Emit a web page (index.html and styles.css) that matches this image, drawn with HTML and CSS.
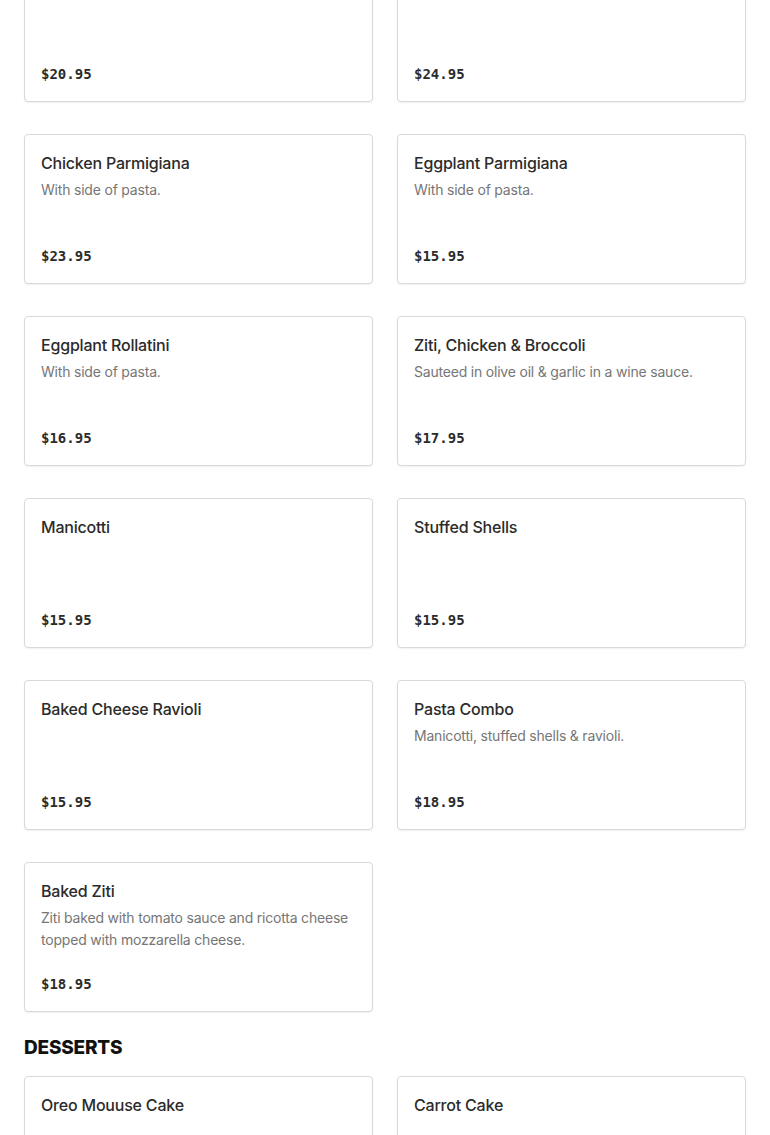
FILE: index.html
```html
<!DOCTYPE html>
<html lang="en">
<head>
<meta charset="utf-8">
<title>Menu</title>
<link rel="stylesheet" href="styles.css">
</head>
<body>
<main class="menu">
  <section class="section section-scrolled">
    <div class="grid">
      <article class="card">
        <h3 class="card-title">Chicken Marsala</h3>
        <p class="card-price">$20.95</p>
      </article>
      <article class="card">
        <h3 class="card-title">Veal Parmigiana</h3>
        <p class="card-price">$24.95</p>
      </article>
      <article class="card">
        <h3 class="card-title">Chicken Parmigiana</h3>
        <p class="card-desc">With side of pasta.</p>
        <p class="card-price">$23.95</p>
      </article>
      <article class="card">
        <h3 class="card-title">Eggplant Parmigiana</h3>
        <p class="card-desc">With side of pasta.</p>
        <p class="card-price">$15.95</p>
      </article>
      <article class="card">
        <h3 class="card-title">Eggplant Rollatini</h3>
        <p class="card-desc">With side of pasta.</p>
        <p class="card-price">$16.95</p>
      </article>
      <article class="card">
        <h3 class="card-title">Ziti, Chicken &amp; Broccoli</h3>
        <p class="card-desc">Sauteed in olive oil &amp; garlic in a wine sauce.</p>
        <p class="card-price">$17.95</p>
      </article>
      <article class="card">
        <h3 class="card-title">Manicotti</h3>
        <p class="card-price">$15.95</p>
      </article>
      <article class="card">
        <h3 class="card-title">Stuffed Shells</h3>
        <p class="card-price">$15.95</p>
      </article>
      <article class="card">
        <h3 class="card-title">Baked Cheese Ravioli</h3>
        <p class="card-price">$15.95</p>
      </article>
      <article class="card">
        <h3 class="card-title">Pasta Combo</h3>
        <p class="card-desc">Manicotti, stuffed shells &amp; ravioli.</p>
        <p class="card-price">$18.95</p>
      </article>
      <article class="card">
        <h3 class="card-title">Baked Ziti</h3>
        <p class="card-desc">Ziti baked with tomato sauce and ricotta cheese topped with mozzarella cheese.</p>
        <p class="card-price">$18.95</p>
      </article>
    </div>
  </section>
  <section class="section">
    <h2 class="section-title">DESSERTS</h2>
    <div class="grid">
      <article class="card">
        <h3 class="card-title">Oreo Mouuse Cake</h3>
        <p class="card-price">$6.95</p>
      </article>
      <article class="card">
        <h3 class="card-title">Carrot Cake</h3>
        <p class="card-price">$6.95</p>
      </article>
    </div>
  </section>
</main>
</body>
</html>
```

FILE: styles.css
```css
* { box-sizing: border-box; }
html, body { margin: 0; padding: 0; background: #fff; }
body {
  font-family: "Inter", "Liberation Sans", sans-serif;
  color: #2b2b2b;
  overflow: hidden;
}
.menu { padding: 0 24px; }
.section-scrolled { margin-top: -48px; }
.grid {
  display: grid;
  grid-template-columns: 1fr 1fr;
  column-gap: 24px;
  row-gap: 32px;
}
.card {
  display: flex;
  flex-direction: column;
  min-height: 150px;
  padding: 16px;
  border: 1px solid #d9d9d9;
  border-radius: 4px;
  box-shadow: 0 1px 2px rgba(0,0,0,0.06);
  background: #fff;
}
.card-title {
  margin: 0 0 4px;
  font-size: 16px;
  line-height: 24px;
  font-weight: 500;
  letter-spacing: -0.2px;
  color: #2b2b2b;
}
.card-desc {
  margin: 0;
  font-size: 14px;
  line-height: 22px;
  letter-spacing: -0.2px;
  color: #767676;
}
.card-price {
  margin: auto 0 0;
  padding-top: 22px;
  font-family: "DejaVu Sans Mono", "Liberation Mono", monospace;
  font-size: 14px;
  line-height: 22px;
  font-weight: 700;
  color: #2b2b2b;
}
.section-title {
  margin: 24px 0 16px;
  font-size: 19px;
  line-height: 24px;
  font-weight: 800;
  color: #111;
  letter-spacing: -0.2px;
}
```
